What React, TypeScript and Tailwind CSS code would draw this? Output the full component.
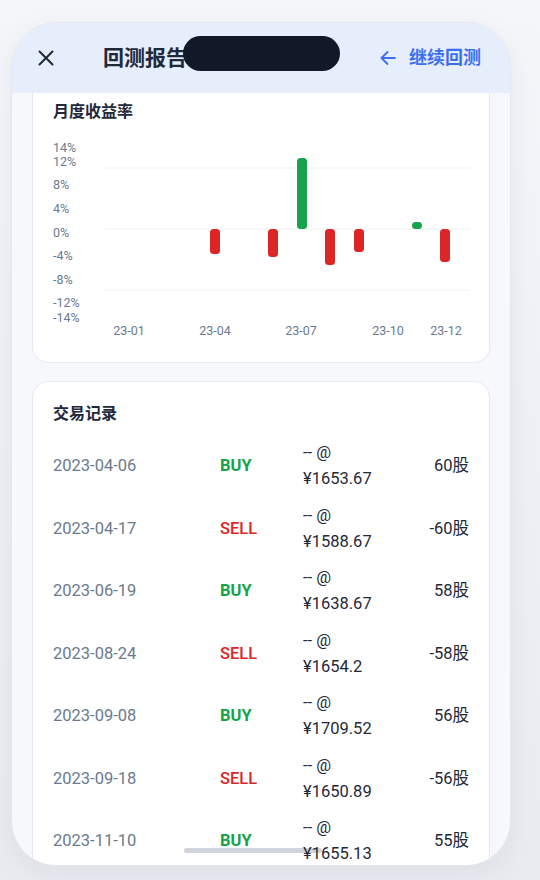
const trades = [
  { date: '2023-04-06', side: 'BUY', price: '¥1653.67', qty: '60股' },
  { date: '2023-04-17', side: 'SELL', price: '¥1588.67', qty: '-60股' },
  { date: '2023-06-19', side: 'BUY', price: '¥1638.67', qty: '58股' },
  { date: '2023-08-24', side: 'SELL', price: '¥1654.2', qty: '-58股' },
  { date: '2023-09-08', side: 'BUY', price: '¥1709.52', qty: '56股' },
  { date: '2023-09-18', side: 'SELL', price: '¥1650.89', qty: '-56股' },
  { date: '2023-11-10', side: 'BUY', price: '¥1655.13', qty: '55股' },
]

// bars in chart coords: x, y, h, positive?
const bars = [
  { x: 157, y: 88, h: 25, up: false },
  { x: 215, y: 88, h: 28, up: false },
  { x: 244, y: 17, h: 71, up: true },
  { x: 272, y: 88, h: 36, up: false },
  { x: 301, y: 88, h: 23, up: false },
  { x: 359, y: 81, h: 7, up: true },
  { x: 387, y: 88, h: 33, up: false },
]

const yLabels = [
  { t: '14%', y: 11 },
  { t: '12%', y: 25 },
  { t: '8%', y: 48 },
  { t: '4%', y: 72 },
  { t: '0%', y: 96 },
  { t: '-4%', y: 119 },
  { t: '-8%', y: 143 },
  { t: '-12%', y: 166 },
  { t: '-14%', y: 181 },
]

const xLabels = [
  { t: '23-01', x: 76 },
  { t: '23-04', x: 162 },
  { t: '23-07', x: 248 },
  { t: '23-10', x: 335 },
  { t: '23-12', x: 393 },
]

function MonthlyChart() {
  return (
    <svg width="417" height="200" viewBox="0 0 417 200" className="block">
      {[27, 88, 149].map((y) => (
        <line key={y} x1="52" x2="417" y1={y} y2={y} stroke="#eef0f4" strokeWidth="1" />
      ))}
      {yLabels.map((l) => (
        <text key={l.t} x="0" y={l.y} fontSize="12.5" fill="#6b7a90" fontFamily="Roboto, sans-serif">
          {l.t}
        </text>
      ))}
      {bars.map((b, i) => (
        <rect key={i} x={b.x} y={b.y} width="10" height={b.h} rx="3.5" fill={b.up ? '#16a34a' : '#dc2626'} />
      ))}
      {xLabels.map((l) => (
        <text key={l.t} x={l.x} y="194" fontSize="12.5" fill="#6b7a90" textAnchor="middle" fontFamily="Roboto, sans-serif">
          {l.t}
        </text>
      ))}
    </svg>
  )
}

export default function App() {
  return (
    <div
      className="w-[540px] h-[880px] pt-[22px] pl-[11px] bg-gradient-to-b from-[#f5f6fa] to-[#e9ebf1]"
      style={{ fontFamily: 'Roboto, "Noto Sans CJK SC", sans-serif' }}
    >
      <div className="relative w-[500px] h-[844px] rounded-[45px] overflow-hidden border border-[#e3e7ef] bg-[#f7f8fc] shadow-[0_8px_30px_rgba(30,41,59,0.06)] flex flex-col">
        {/* header */}
        <div className="h-[70px] shrink-0 bg-[#e6edfb] flex items-center pl-[26px] pr-[29px]">
          <svg width="16" height="16" viewBox="0 0 16 16" className="shrink-0">
            <path d="M1.5 1.5 14.5 14.5M14.5 1.5 1.5 14.5" stroke="#1e293b" strokeWidth="2" strokeLinecap="round" />
          </svg>
          <h1 className="ml-[49px] text-[21px] font-bold text-[#1e293b] leading-none">回测报告</h1>
          <div className="ml-auto flex items-center gap-[13px] text-[#3a6ff2]">
            <svg width="16" height="14" viewBox="0 0 16 14">
              <path d="M15 7H1.5M7.5 1 1.5 7l6 6" stroke="currentColor" strokeWidth="1.8" fill="none" strokeLinecap="round" strokeLinejoin="round" />
            </svg>
            <span className="text-[18px] font-bold leading-none">继续回测</span>
          </div>
        </div>

        {/* dynamic island */}
        <div className="absolute top-[13px] left-[171px] w-[157px] h-[35px] rounded-full bg-[#111827]" />

        {/* home indicator: above card background, below row text */}
        <div className="absolute z-[5] left-[172px] top-[825px] w-[138px] h-[5px] rounded-full bg-[#d1d5db]" />

        <div className="relative flex-1 overflow-hidden px-[20px]">
          {/* monthly returns */}
          <section className="bg-white border border-t-0 border-[#e6e9f2] rounded-b-2xl px-[20px] pt-[8px] pb-[21px]">
            <h2 className="text-[16px] font-bold text-[#1e293b] leading-[22px]">月度收益率</h2>
            <div className="mt-[18px]">
              <MonthlyChart />
            </div>
          </section>

          {/* trades */}
          <section className="mt-[18px] bg-white border border-[#e6e9f2] rounded-2xl px-[20px] pt-[21px]">
            <h2 className="text-[16px] font-bold text-[#1e293b] leading-[22px]">交易记录</h2>
            <div className="mt-[10px]">
              {trades.map((t) => (
                <div
                  key={t.date}
                  className="grid grid-cols-[167px_83px_1fr_auto] items-center h-[62.5px] text-[16.5px] leading-[26px]"
                >
                  <span className="relative z-10 text-[#6b7a90]">{t.date}</span>
                  <span
                    className={
                      t.side === 'BUY'
                        ? 'relative z-10 font-bold text-[#16a34a]'
                        : 'relative z-10 font-medium text-[#dc2626]'
                    }
                  >
                    {t.side}
                  </span>
                  <div className="relative z-10 text-[#1f2937]">
                    <div>-- @</div>
                    <div>{t.price}</div>
                  </div>
                  <span className="relative z-10 text-right text-[#1f2937]">{t.qty}</span>
                </div>
              ))}
            </div>
          </section>
        </div>
      </div>
    </div>
  )
}
